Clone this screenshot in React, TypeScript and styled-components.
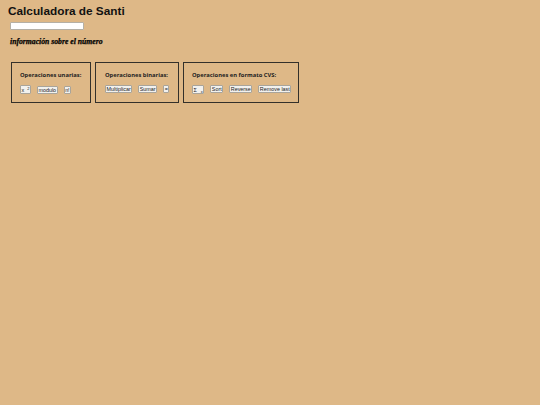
import styled, { createGlobalStyle } from "styled-components";

const GlobalStyle = createGlobalStyle`
  html, body {
    margin: 0;
    height: 100%;
    background-color: #deb887;
  }
  body {
    font-family: "Liberation Sans", Arial, sans-serif;
    color: #111;
  }
`;

const Page = styled.div`
  display: flex;
  flex-direction: column;
  align-items: flex-start;
  padding: 4px 0 0 8px;
`;

const Title = styled.h1`
  margin: 0;
  font-size: 11.8px;
  line-height: 14px;
  font-weight: 700;
`;

const NumberInput = styled.input`
  box-sizing: border-box;
  width: 74px;
  height: 8px;
  margin: 4px 0 0 2px;
  padding: 0;
  background: #fff;
  border: 1px solid #b5b0a6;
  border-radius: 1px;
`;

const Info = styled.p`
  margin: 6px 0 0 2px;
  font-family: "Liberation Serif", serif;
  font-style: italic;
  font-weight: 700;
  font-size: 7.7px;
  line-height: 11px;
  -webkit-text-stroke: 0.25px #000;
  color: #000;
`;

const Panels = styled.div`
  display: flex;
  gap: 4px;
  margin: 15px 0 0 3px;
`;

const Panel = styled.section<{ $width: number; $inset: number }>`
  box-sizing: border-box;
  width: ${(props) => props.$width}px;
  height: 41px;
  padding: 8px 0 0 ${(props) => props.$inset}px;
  border: 1px solid #33302a;
`;

const PanelTitle = styled.h2`
  margin: 0;
  font-family: "Open Sans", "Noto Sans", sans-serif;
  font-size: 5.8px;
  line-height: 9px;
  font-weight: 700;
  color: #222;
`;

const Buttons = styled.div<{ $align: string }>`
  display: flex;
  align-items: ${(props) => props.$align};
  gap: 6px;
  height: 9px;
  margin-top: 5px;
`;

const OpButton = styled.button<{ $tall?: boolean }>`
  box-sizing: border-box;
  display: flex;
  align-items: center;
  height: ${(props) => (props.$tall ? 9 : 8)}px;
  padding: 0 0.5px;
  font-family: "Liberation Sans", Arial, sans-serif;
  font-size: 5.4px;
  line-height: 6px;
  color: #222;
  background: #f2f1ee;
  border: 1px solid #a9a49a;
  border-radius: 1px;
  white-space: nowrap;
`;

const Power = styled.span`
  display: inline-block;
  margin-left: 3px;
  font-size: 4px;
  transform: translateY(-1.5px);
`;

const Sub = styled.span`
  display: inline-block;
  margin-left: 4px;
  font-size: 4px;
  transform: translateY(1.5px);
`;

export default function App() {
  return (
    <>
      <GlobalStyle />
      <Page>
        <Title>Calculadora de Santi</Title>
        <NumberInput type="text" />
        <Info>información sobre el número</Info>
        <Panels>
          <Panel $width={80} $inset={8}>
            <PanelTitle>Operaciones unarias:</PanelTitle>
            <Buttons $align="flex-end">
              <OpButton $tall>
                x<Power>2</Power>
              </OpButton>
              <OpButton>modulo</OpButton>
              <OpButton>n!</OpButton>
            </Buttons>
          </Panel>
          <Panel $width={84} $inset={9}>
            <PanelTitle>Operaciones binarias:</PanelTitle>
            <Buttons $align="flex-start">
              <OpButton>Multiplicar</OpButton>
              <OpButton>Sumar</OpButton>
              <OpButton>=</OpButton>
            </Buttons>
          </Panel>
          <Panel $width={116} $inset={8}>
            <PanelTitle>Operaciones en formato CVS:</PanelTitle>
            <Buttons $align="flex-start">
              <OpButton $tall>
                Σ<Sub>x</Sub>
              </OpButton>
              <OpButton>Sort</OpButton>
              <OpButton>Reverse</OpButton>
              <OpButton>Remove last</OpButton>
            </Buttons>
          </Panel>
        </Panels>
      </Page>
    </>
  );
}
